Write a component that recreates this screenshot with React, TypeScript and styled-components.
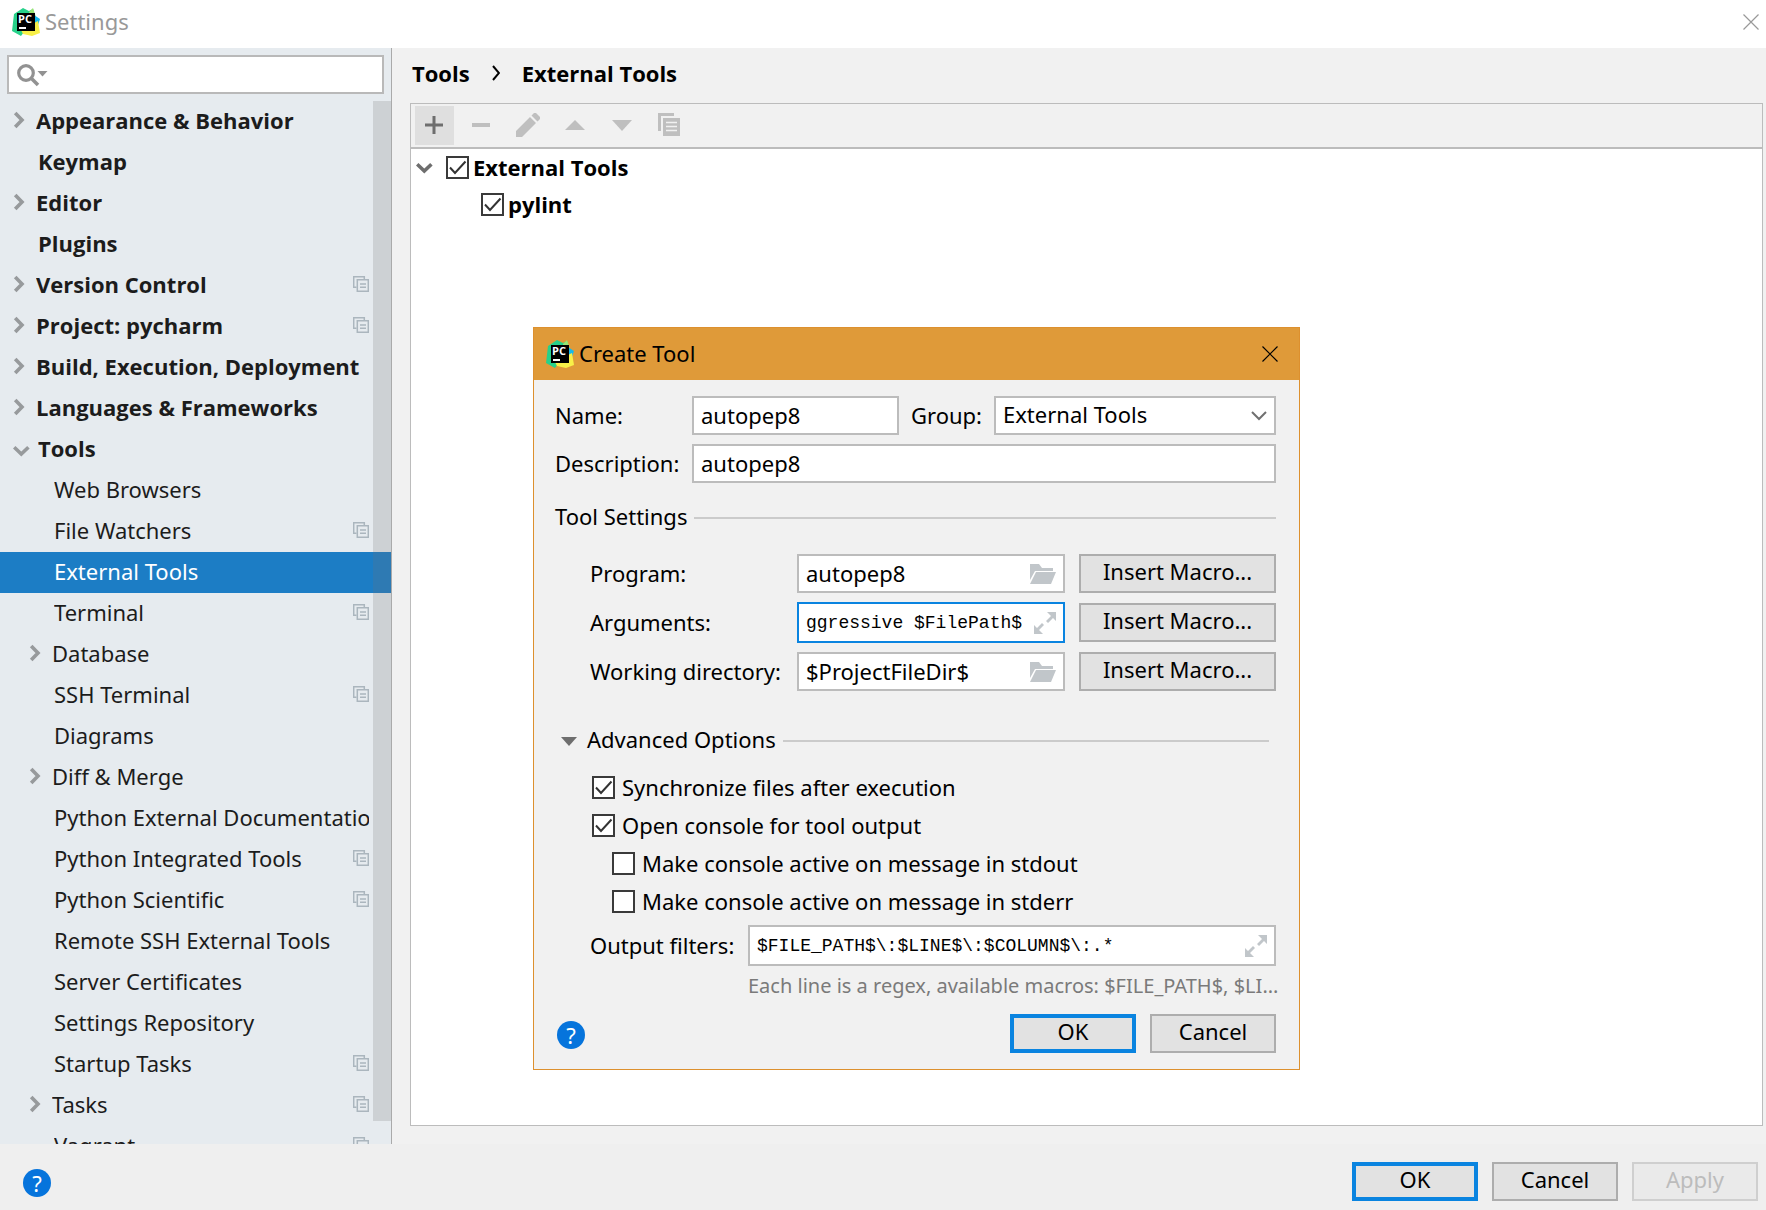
import React, { useId, useState } from "react";
import styled, { createGlobalStyle, css } from "styled-components";

const GlobalStyle = createGlobalStyle`
  *, *::before, *::after { box-sizing: border-box; }
  body {
    margin: 0;
    background: #f1f1f1;
    color: #000;
    font-family: "Noto Sans", "Open Sans", sans-serif;
    font-size: 22px;
    line-height: 30px;
  }
  button, input, select { font: inherit; color: inherit; margin: 0; }
`;

const line = "#bcbcbc";
const accent = "#0a84e0";

const boldText = css`
  font-family: "Open Sans", "Noto Sans", sans-serif;
  font-weight: 700;
`;

/* ---------- window shell ---------- */

const Window = styled.div`
  position: relative;
  display: flex;
  flex-direction: column;
  height: 100vh;
  overflow: hidden;
`;

const TitleBar = styled.header`
  display: flex;
  align-items: center;
  gap: 5px;
  flex: none;
  height: 48px;
  padding: 0 7px 5px 12px;
  background: #fff;
  color: #999;
`;

const Title = styled.h1`
  flex: 1;
  margin: 0;
  padding-bottom: 2px;
  font-size: 22px;
  font-weight: 400;
`;

const IconButton = styled.button`
  display: grid;
  place-items: center;
  padding: 0;
  border: 0;
  background: none;
`;

const Body = styled.div`
  display: flex;
  flex: 1;
  min-height: 0;
`;

const Footer = styled.footer`
  display: flex;
  align-items: center;
  gap: 14px;
  flex: none;
  height: 66px;
  padding: 9px 8px 0 23px;
  background: #efefef;
`;

const Spacer = styled.div`
  flex: 1;
`;

const HelpButton = styled.button`
  width: 28px;
  height: 28px;
  margin-top: 2px;
  padding: 0;
  border: 0;
  border-radius: 50%;
  background: #0674dc;
  color: #fff;
  font-size: 22px;
  line-height: 28px;
`;

const PushButton = styled.button<{ $primary?: boolean }>`
  height: 39px;
  min-width: 126px;
  padding: 0 0 4px;
  border: ${(p) => (p.$primary ? `4px solid ${accent}` : "2px solid #adadad")};
  background: #e2e2e2;
  line-height: 27px;
  &:disabled {
    border-color: #cfcfcf;
    background: #eaeaea;
    color: #bcbcbc;
  }
`;

/* ---------- sidebar ---------- */

const Sidebar = styled.nav`
  display: flex;
  flex-direction: column;
  flex: none;
  width: 392px;
  border-right: 1px solid #aaa;
  background: #e6ebef;
`;

const SearchBox = styled.label`
  display: flex;
  align-items: center;
  flex: none;
  height: 39px;
  margin: 7px;
  padding-left: 8px;
  border: 2px solid #b9b9b9;
  background: #fff;
`;

const SearchInput = styled.input`
  flex: 1;
  min-width: 0;
  border: 0;
  outline: 0;
  background: none;
`;

const TreeArea = styled.div`
  position: relative;
  flex: 1;
  min-height: 0;
  overflow: hidden;
`;

const Tree = styled.ul`
  margin: 0;
  padding: 0;
  list-style: none;
`;

const TreeRow = styled.button<{ $child: boolean; $closed: boolean; $selected: boolean }>`
  display: grid;
  grid-template-columns: ${(p) => (p.$closed ? 23 : 25)}px minmax(0, 1fr) auto;
  align-items: center;
  width: 100%;
  height: 41px;
  padding: 0 22px 4px ${(p) => (p.$child ? 29 : 13)}px;
  border: 0;
  background: ${(p) => (p.$selected ? "#1c7dc5" : "transparent")};
  color: ${(p) => (p.$selected ? "#fff" : "#1c1c1c")};
  text-align: left;
  ${(p) => !p.$child && boldText}
`;

const TreeLabel = styled.span`
  overflow: hidden;
  white-space: nowrap;
`;

const ScrollThumb = styled.div`
  position: absolute;
  top: 0;
  right: 0;
  width: 18px;
  height: 1020px;
  max-height: 98%;
  background: rgba(113, 113, 113, 0.21);
`;

/* ---------- main panel ---------- */

const Main = styled.main`
  display: flex;
  flex: 1;
  flex-direction: column;
  min-width: 0;
  padding: 0 3px 18px 18px;
`;

const Breadcrumbs = styled.div`
  display: flex;
  align-items: center;
  gap: 22px;
  flex: none;
  height: 55px;
  padding: 0 2px 6px;
  ${boldText}
`;

const Panel = styled.section`
  display: flex;
  flex: 1;
  flex-direction: column;
  min-height: 0;
  border: 1px solid ${line};
  background: #fff;
`;

const Toolbar = styled.div`
  display: flex;
  align-items: center;
  gap: 8px;
  height: 45px;
  padding: 0 4px;
  border-bottom: 2px solid ${line};
  background: #f1f1f1;
`;

const ToolButton = styled(IconButton)<{ $active?: boolean }>`
  width: 39px;
  height: 39px;
  background: ${(p) => (p.$active ? "#dfdfdf" : "none")};
`;

const ToolRow = styled.div<{ $level: number }>`
  display: flex;
  align-items: center;
  gap: 13px;
  height: 37px;
  padding-left: ${(p) => (p.$level ? 70 : 5)}px;
  ${boldText}
`;

/* ---------- form parts ---------- */

const CheckLabel = styled.label<{ $tight?: boolean }>`
  display: flex;
  align-items: center;
  gap: ${(p) => (p.$tight ? 4 : 7)}px;
`;

const CheckText = styled.span<{ $tight?: boolean }>`
  padding-bottom: ${(p) => (p.$tight ? 2 : 0)}px;
`;

const CheckFrame = styled.span`
  display: grid;
  width: 23px;
  height: 23px;
  > * { grid-area: 1 / 1; }
  > svg { pointer-events: none; }
`;

const CheckInput = styled.input`
  appearance: none;
  width: 23px;
  height: 23px;
  border: 2px solid #3a3a3a;
  background: #fff;
`;

const FieldLabel = styled.label`
  padding-bottom: 2px;
  white-space: nowrap;
`;

const fieldFrame = css`
  height: 39px;
  border: 2px solid ${line};
  background: #fff;
`;

const TextInput = styled.input`
  ${fieldFrame}
  width: 100%;
  min-width: 0;
  padding: 0 7px 2px;
  border-radius: 0;
  outline: 0;
`;

const FieldBox = styled.div<{ $focused?: boolean; $tall?: boolean }>`
  ${fieldFrame}
  display: flex;
  align-items: center;
  gap: 6px;
  min-width: 0;
  height: ${(p) => (p.$tall ? 41 : 39)}px;
  padding: 0 7px;
  border-color: ${(p) => (p.$focused ? accent : line)};
`;

const BareInput = styled.input<{ $mono?: boolean }>`
  flex: 1;
  min-width: 0;
  padding: 0 0 2px;
  border: 0;
  outline: 0;
  background: none;
  ${(p) =>
    p.$mono &&
    css`
      padding: 0;
      font-family: "Liberation Mono", monospace;
      font-size: 18px;
    `}
`;

const SelectBox = styled.div`
  ${fieldFrame}
  display: grid;
  align-items: center;
  > * { grid-area: 1 / 1; }
  > svg { justify-self: end; margin-right: 7px; pointer-events: none; }
`;

const Select = styled.select`
  appearance: none;
  width: 100%;
  padding: 0 30px 4px 7px;
  border: 0;
  outline: 0;
  background: none;
`;

/* ---------- dialog ---------- */

const Dialog = styled.section`
  position: absolute;
  top: 327px;
  left: 533px;
  width: 767px;
  border: 1px solid #dd902e;
  background: #f1f1f1;
`;

const DialogTitle = styled.header`
  display: flex;
  align-items: center;
  gap: 5px;
  height: 52px;
  padding: 0 21px 1px 12px;
  background: #df9a39;
`;

const DialogName = styled.span`
  flex: 1;
  padding-bottom: 2px;
`;

const DialogForm = styled.form`
  display: flex;
  flex-direction: column;
  padding: 16px 23px 16px 21px;
`;

const TopFields = styled.div`
  display: grid;
  grid-template-columns: 137px 207px 95px minmax(0, 1fr);
  row-gap: 9px;
  align-items: center;
`;

const GroupLabel = styled(FieldLabel)`
  padding-left: 12px;
`;

const DescriptionCell = styled.div`
  grid-column: 2 / -1;
`;

const SectionHead = styled.div<{ $inset?: boolean }>`
  display: flex;
  align-items: center;
  gap: 7px;
  padding: ${(p) => (p.$inset ? "0 7px 0 6px" : "0")};
  margin: ${(p) => (p.$inset ? "32px 0 10px" : "18px 0")};
  &::after {
    content: "";
    flex: 1;
    height: 2px;
    background: #cbcbcb;
  }
`;

const SectionText = styled.span`
  padding-bottom: 4px;
`;

const Disclosure = styled.button`
  display: flex;
  align-items: center;
  gap: 10px;
  padding: 0;
  border: 0;
  background: none;
`;

const MacroFields = styled.div`
  display: grid;
  grid-template-columns: 207px minmax(0, 1fr) 197px;
  grid-auto-rows: 41px;
  row-gap: 8px;
  align-items: center;
  padding-left: 35px;
`;

const FieldWithGap = styled.div`
  margin-right: 14px;
`;

const Options = styled.div`
  display: flex;
  flex-direction: column;
  padding-left: 35px;
`;

const OptionRow = styled.div<{ $nested?: boolean }>`
  display: flex;
  align-items: center;
  height: 38px;
  padding-left: ${(p) => (p.$nested ? 22 : 2)}px;
`;

const FilterRow = styled.div`
  display: grid;
  grid-template-columns: 158px minmax(0, 1fr);
  align-items: center;
  margin-top: 5px;
`;

const Hint = styled.p`
  grid-column: 2;
  margin: 5px 0 13px;
  color: #7a7a7a;
  font-size: 20px;
  white-space: nowrap;
`;

const DialogActions = styled.div`
  display: flex;
  align-items: center;
  gap: 14px;
  padding-left: 2px;
`;

/* ---------- icons ---------- */

const Logo = () => (
  <svg width="28" height="28" viewBox="0 0 28 28" aria-hidden="true">
    <path d="M2 6 11 0 17 3 21 1 23 8 12 24 9 28 0 23Z" fill="#27d18a" />
    <path d="M17 4 21 0 24 9 17 9Z" fill="#9ae472" />
    <path d="M22 7 28 11 26 17 21 17Z" fill="#16b9ec" />
    <path d="M24 14 26 13 28 25 20 28 11 26 9 22Z" fill="#f8f048" />
    <rect x="5" y="5" width="18" height="18" fill="#000" />
    <rect x="7" y="19" width="7" height="2" fill="#fff" />
    <text x="6" y="15" fill="#fff" fontFamily="Open Sans, sans-serif" fontWeight="700" fontSize="11">
      PC
    </text>
  </svg>
);

const Close = ({ color }: { color: string }) => (
  <svg width="16" height="16" viewBox="0 0 16 16" fill="none" stroke={color} strokeWidth="1.2">
    <path d="M.5.5l15 15M15.5.5l-15 15" />
  </svg>
);

const ChevronRight = () => (
  <svg width="12" height="18" viewBox="0 0 12 18" fill="none" stroke="#979a9c" strokeWidth="3.6">
    <path d="M2.2 2 9 9 2.2 16" />
  </svg>
);

const ChevronDown = ({ color = "#979a9c" }: { color?: string }) => (
  <svg width="17" height="12" viewBox="0 0 17 12" fill="none" stroke={color} strokeWidth="3.6">
    <path d="M1.2 2.2 8.3 9 15.4 2.2" />
  </svg>
);

const ProjectMark = () => (
  <svg width="16" height="16" viewBox="0 0 16 16" fill="none" stroke="#abb6be" strokeWidth="1.5">
    <path d="M3.5 11.3H.7V.7h10.6v2.2" />
    <path d="M4.3 3.7h11v11.6h-11zM7 8h6M7 11.3h6" />
  </svg>
);

const SearchIcon = () => (
  <svg width="32" height="24" viewBox="0 0 32 24">
    <circle cx="9" cy="10" r="7.3" fill="none" stroke="#929292" strokeWidth="3.2" />
    <path d="m14 15 7 7" stroke="#929292" strokeWidth="3.6" />
    <path d="M20.5 8h10L25.5 13.5z" fill="#929292" />
  </svg>
);

const Folder = () => (
  <svg width="26" height="20" viewBox="0 0 26 20" fill="#c1c6ca">
    <path d="M0 0h9l3 4h11v3H5L0 16z" />
    <path d="M6 8h20l-5 12H0z" />
  </svg>
);

const Expand = () => (
  <svg width="22" height="22" viewBox="0 0 22 22" fill="#c1c6ca">
    <path d="M13 0h9v9l-3-3-5 5-2-2 5-5z" />
    <path d="M0 13l3 3 5-5 2 2-5 5 4 4H0z" />
  </svg>
);

const toolIcons = {
  add: <path d="M3 10.500h18v3H3zM10.500 3h3v18h-3z" fill="#6e6e6e" />,
  remove: <path d="M3 10h18v4H3z" fill="#bfbfbf" />,
  edit: (
    <path d="M0 18 14 4l6 6L6 24H0zM15.500 2.500 18 0h2l4 4v2l-2.500 2.500z" fill="#bfbfbf" />
  ),
  up: <path d="M2 17 12 7l10 10z" fill="#bfbfbf" />,
  down: <path d="M2 7h20L12 18z" fill="#bfbfbf" />,
  copy: (
    <>
      <path d="M1 0h16v3H4v15H1z" fill="#bfbfbf" />
      <path d="M6 5h17v18H6z" fill="#bfbfbf" />
      <path d="M9 9.500h11M9 13.500h11M9 17.500h11" stroke="#f1f1f1" strokeWidth="1.500" />
    </>
  ),
};

type ToolName = keyof typeof toolIcons;

/* ---------- composed pieces ---------- */

interface CheckProps {
  text: string;
  initial?: boolean;
  tight?: boolean;
}

function Check({ text, initial = false, tight }: CheckProps) {
  const [on, setOn] = useState(initial);
  return (
    <CheckLabel $tight={tight}>
      <CheckFrame>
        <CheckInput type="checkbox" checked={on} onChange={() => setOn(!on)} />
        {on && (
          <svg width="23" height="23" viewBox="0 0 23 23" fill="none" stroke="#333" strokeWidth="2">
            <path d="M4 11.500 9 17 19.500 5.500" />
          </svg>
        )}
      </CheckFrame>
      <CheckText $tight={tight}>{text}</CheckText>
    </CheckLabel>
  );
}

interface MacroFieldProps {
  label: string;
  value: string;
  expandable?: boolean;
}

function MacroField({ label, value, expandable }: MacroFieldProps) {
  const id = useId();
  return (
    <>
      <FieldLabel htmlFor={id}>{label}</FieldLabel>
      <FieldWithGap>
        <FieldBox $focused={expandable} $tall={expandable}>
          <BareInput id={id} defaultValue={value} $mono={expandable} spellCheck={false} />
          <IconButton type="button" aria-label={expandable ? "Expand" : "Browse"}>
            {expandable ? <Expand /> : <Folder />}
          </IconButton>
        </FieldBox>
      </FieldWithGap>
      <PushButton type="button">Insert Macro...</PushButton>
    </>
  );
}

interface Item {
  label: string;
  child?: boolean;
  arrow?: "right" | "down";
  mark?: boolean;
}

const items: Item[] = [
  { label: "Appearance & Behavior", arrow: "right" },
  { label: "Keymap" },
  { label: "Editor", arrow: "right" },
  { label: "Plugins" },
  { label: "Version Control", arrow: "right", mark: true },
  { label: "Project: pycharm", arrow: "right", mark: true },
  { label: "Build, Execution, Deployment", arrow: "right" },
  { label: "Languages & Frameworks", arrow: "right" },
  { label: "Tools", arrow: "down" },
  { label: "Web Browsers", child: true },
  { label: "File Watchers", child: true, mark: true },
  { label: "External Tools", child: true },
  { label: "Terminal", child: true, mark: true },
  { label: "Database", child: true, arrow: "right" },
  { label: "SSH Terminal", child: true, mark: true },
  { label: "Diagrams", child: true },
  { label: "Diff & Merge", child: true, arrow: "right" },
  { label: "Python External Documentation", child: true },
  { label: "Python Integrated Tools", child: true, mark: true },
  { label: "Python Scientific", child: true, mark: true },
  { label: "Remote SSH External Tools", child: true },
  { label: "Server Certificates", child: true },
  { label: "Settings Repository", child: true },
  { label: "Startup Tasks", child: true, mark: true },
  { label: "Tasks", child: true, arrow: "right", mark: true },
  { label: "Vagrant", child: true, mark: true },
];

const tools: { name: ToolName; title: string }[] = [
  { name: "add", title: "Add" },
  { name: "remove", title: "Remove" },
  { name: "edit", title: "Edit" },
  { name: "up", title: "Move up" },
  { name: "down", title: "Move down" },
  { name: "copy", title: "Copy" },
];

function CreateToolDialog() {
  return (
    <Dialog role="dialog" aria-label="Create Tool">
      <DialogTitle>
        <Logo />
        <DialogName>Create Tool</DialogName>
        <IconButton type="button" aria-label="Close dialog">
          <Close color="#000" />
        </IconButton>
      </DialogTitle>
      <DialogForm onSubmit={(e) => e.preventDefault()}>
        <TopFields>
          <FieldLabel htmlFor="tool-name">Name:</FieldLabel>
          <TextInput id="tool-name" defaultValue="autopep8" spellCheck={false} />
          <GroupLabel htmlFor="tool-group">Group:</GroupLabel>
          <SelectBox>
            <Select id="tool-group" defaultValue="External Tools">
              <option>External Tools</option>
            </Select>
            <svg width="16" height="10" viewBox="0 0 16 10" fill="none" stroke="#707070" strokeWidth="2">
              <path d="M1 1l7 7 7-7" />
            </svg>
          </SelectBox>
          <FieldLabel htmlFor="tool-description">Description:</FieldLabel>
          <DescriptionCell>
            <TextInput id="tool-description" defaultValue="autopep8" spellCheck={false} />
          </DescriptionCell>
        </TopFields>

        <SectionHead>
          <SectionText>Tool Settings</SectionText>
        </SectionHead>
        <MacroFields>
          <MacroField label="Program:" value="autopep8" />
          <MacroField label="Arguments:" value="ggressive $FilePath$" expandable />
          <MacroField label="Working directory:" value="$ProjectFileDir$" />
        </MacroFields>

        <SectionHead $inset>
          <Disclosure type="button" aria-expanded="true">
            <svg width="16" height="9" viewBox="0 0 16 9" fill="#6e6e6e">
              <path d="M0 0h16L8 9z" />
            </svg>
            <SectionText>Advanced Options</SectionText>
          </Disclosure>
        </SectionHead>
        <Options>
          <OptionRow>
            <Check text="Synchronize files after execution" initial />
          </OptionRow>
          <OptionRow>
            <Check text="Open console for tool output" initial />
          </OptionRow>
          <OptionRow $nested>
            <Check text="Make console active on message in stdout" />
          </OptionRow>
          <OptionRow $nested>
            <Check text="Make console active on message in stderr" />
          </OptionRow>
          <FilterRow>
            <FieldLabel htmlFor="output-filters">Output filters:</FieldLabel>
            <FieldBox $tall>
              <BareInput
                id="output-filters"
                defaultValue="$FILE_PATH$\:$LINE$\:$COLUMN$\:.*"
                $mono
                spellCheck={false}
              />
              <IconButton type="button" aria-label="Expand">
                <Expand />
              </IconButton>
            </FieldBox>
            <Hint>Each line is a regex, available macros: $FILE_PATH$, $LI...</Hint>
          </FilterRow>
        </Options>
        <DialogActions>
          <HelpButton type="button" aria-label="Dialog help">?</HelpButton>
          <Spacer />
          <PushButton type="submit" $primary>OK</PushButton>
          <PushButton type="button">Cancel</PushButton>
        </DialogActions>
      </DialogForm>
    </Dialog>
  );
}

export default function App() {
  const [selected, setSelected] = useState("External Tools");
  return (
    <>
      <GlobalStyle />
      <Window>
        <TitleBar>
          <Logo />
          <Title>Settings</Title>
          <IconButton type="button" aria-label="Close">
            <Close color="#999" />
          </IconButton>
        </TitleBar>
        <Body>
          <Sidebar>
            <SearchBox>
              <SearchIcon />
              <SearchInput type="text" aria-label="Search settings" />
            </SearchBox>
            <TreeArea>
              <Tree>
                {items.map((item) => (
                  <li key={item.label}>
                    <TreeRow
                      type="button"
                      $child={!!item.child}
                      $closed={item.arrow === "right"}
                      $selected={item.label === selected}
                      onClick={() => setSelected(item.label)}
                    >
                      <span>
                        {item.arrow === "right" && <ChevronRight />}
                        {item.arrow === "down" && <ChevronDown />}
                      </span>
                      <TreeLabel>{item.label}</TreeLabel>
                      {item.mark && <ProjectMark />}
                    </TreeRow>
                  </li>
                ))}
              </Tree>
              <ScrollThumb />
            </TreeArea>
          </Sidebar>
          <Main>
            <Breadcrumbs>
              <span>Tools</span>
              <svg width="8" height="16" viewBox="0 0 8 16" fill="none" stroke="#000" strokeWidth="2">
                <path d="M1 1l6 7-6 7" />
              </svg>
              <span>External Tools</span>
            </Breadcrumbs>
            <Panel>
              <Toolbar>
                {tools.map((tool) => (
                  <ToolButton
                    key={tool.name}
                    type="button"
                    aria-label={tool.title}
                    $active={tool.name === "add"}
                  >
                    <svg width="25" height="25" viewBox="0 0 25 25">
                      {toolIcons[tool.name]}
                    </svg>
                  </ToolButton>
                ))}
              </Toolbar>
              <ToolRow $level={0}>
                <ChevronDown color="#6e6e6e" />
                <Check text="External Tools" initial tight />
              </ToolRow>
              <ToolRow $level={1}>
                <Check text="pylint" initial tight />
              </ToolRow>
            </Panel>
          </Main>
        </Body>
        <Footer>
          <HelpButton type="button" aria-label="Help">?</HelpButton>
          <Spacer />
          <PushButton type="button" $primary>OK</PushButton>
          <PushButton type="button">Cancel</PushButton>
          <PushButton type="button" disabled>Apply</PushButton>
        </Footer>
        <CreateToolDialog />
      </Window>
    </>
  );
}
